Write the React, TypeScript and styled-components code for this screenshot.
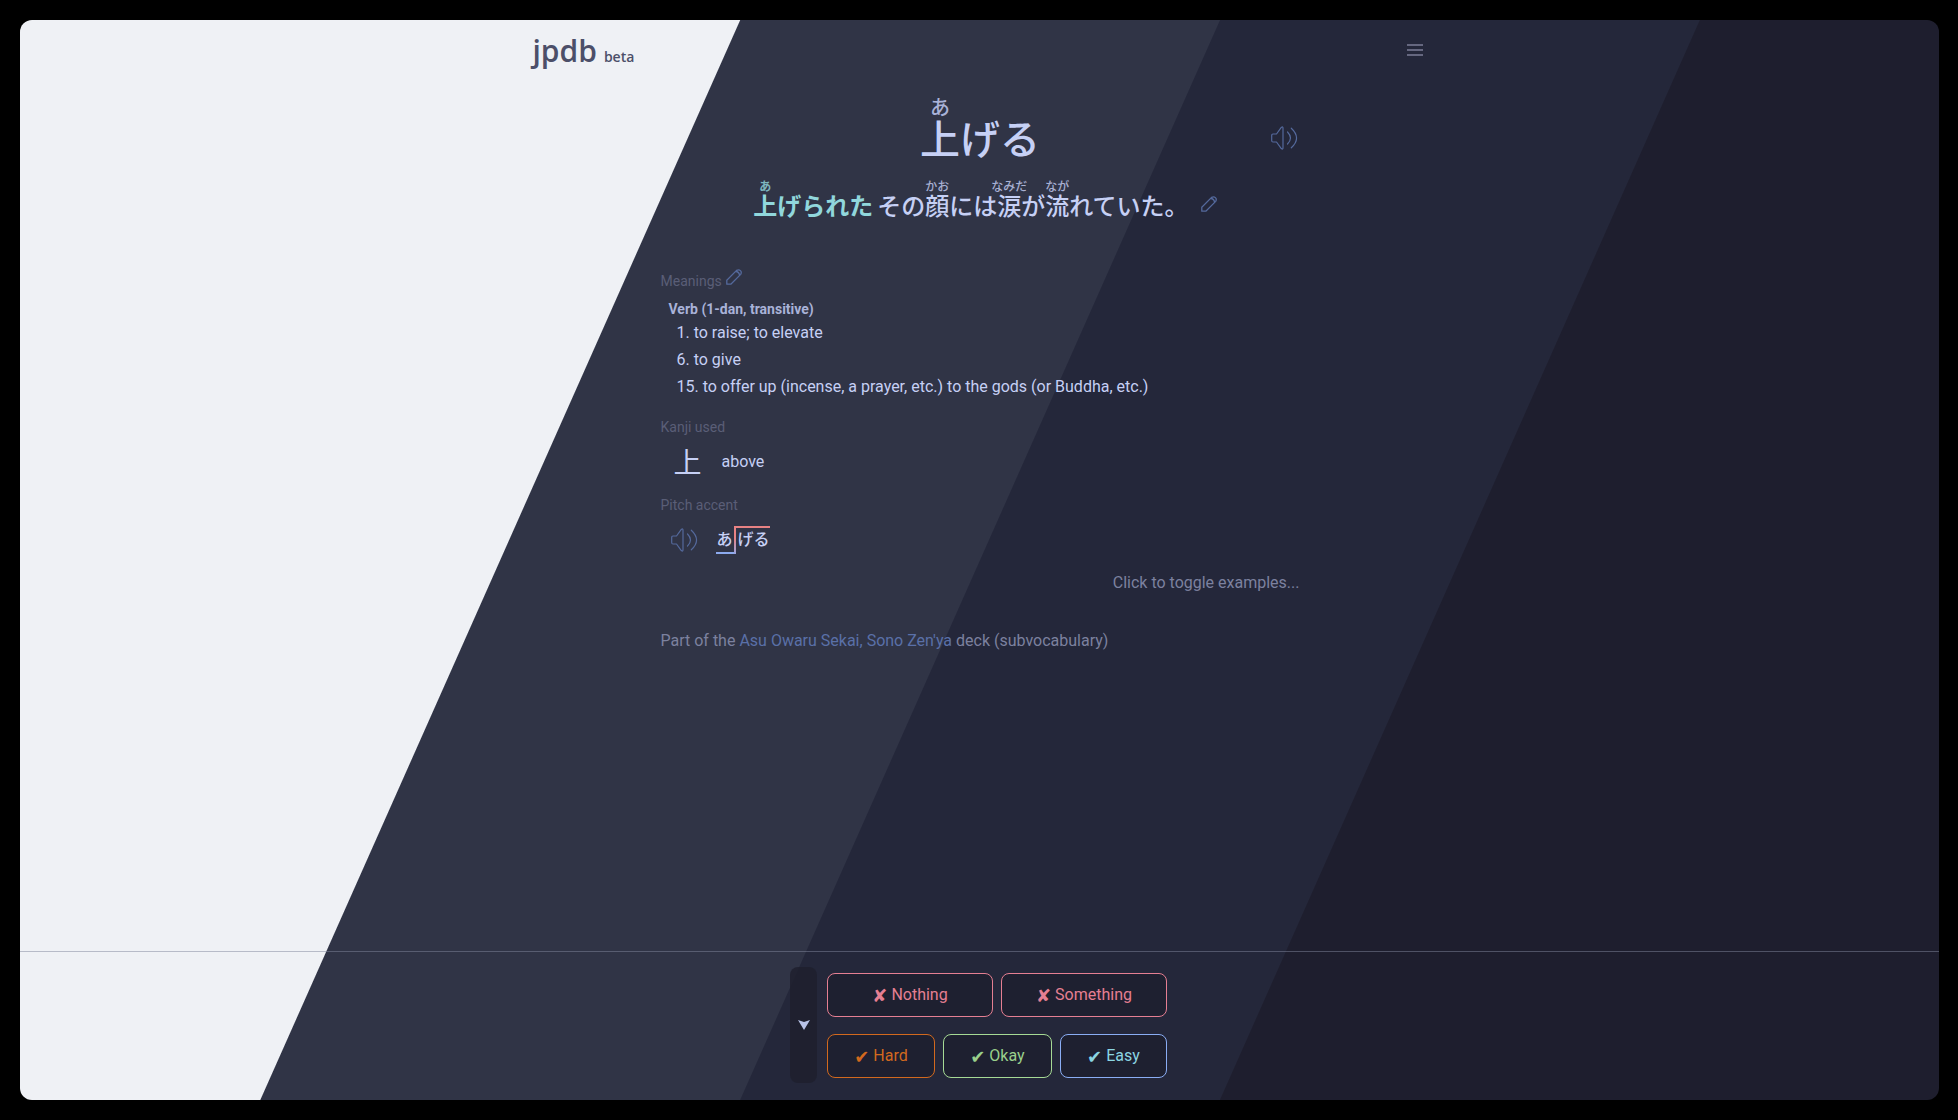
import React from "react";
import styled, { createGlobalStyle, css } from "styled-components";

const latin = `Roboto, "Noto Sans CJK JP", "DejaVu Sans", sans-serif`;
const japanese = `"Liberation Sans", "Noto Sans CJK JP", sans-serif`;

const GlobalStyle = createGlobalStyle`
  * { box-sizing: border-box; }
  body {
    margin: 0;
    background: #000;
    color: #c6d0f5;
    font: 16px/24px ${latin};
  }
  button, a { font: inherit; color: inherit; }
  button { cursor: pointer; }
`;

const Frame = styled.div`
  min-height: 100vh;
  padding: 20px 19px 20px 20px;
  display: flex;
`;

const Page = styled.div`
  flex: 1;
  display: flex;
  flex-direction: column;
  overflow: hidden;
  border-radius: 12px;
  background: linear-gradient(
    113.96deg,
    #eff1f5 30%,
    #303446 calc(30% + 1px) 50%,
    #24273a calc(50% + 1px) 70%,
    #1e1e2e calc(70% + 1px)
  );
`;

const Header = styled.header`
  width: 100%;
  max-width: 900px;
  height: 60px;
  margin: 0 auto;
  padding: 0 7px 0 3px;
  display: flex;
  align-items: center;
  justify-content: space-between;
`;

const Logo = styled.a`
  display: flex;
  align-items: baseline;
  gap: 7px;
  padding-top: 8px;
  color: #4c4f69;
  text-decoration: none;
  && { font: 600 30px/40px "Open Sans", sans-serif; }
`;

const Beta = styled.span`
  font-size: 14px;
`;

const PlainButton = styled.button`
  display: flex;
  padding: 0;
  border: 0;
  background: none;
  color: #54699c;
`;

const MenuButton = styled(PlainButton)`
  color: #65677f;
`;

const Main = styled.main`
  flex: 1;
  width: 100%;
  max-width: 642px;
  margin: 0 auto;
  padding: 0 1px 0 2px;
`;

const TitleRow = styled.div`
  display: grid;
  grid-template-columns: 1fr auto 1fr;
  align-items: end;
  padding: 17px 2px 0;
`;

const Title = styled.h1`
  grid-column: 2;
  margin: 0;
  font: 500 40px/52px ${japanese};

  rt {
    font-size: 20px;
    line-height: 24px;
    color: #a9b2d8;
  }
`;

const TitleAudio = styled(PlainButton)`
  justify-self: end;
  margin-bottom: 16px;
`;

const Sentence = styled.p`
  display: flex;
  align-items: center;
  justify-content: center;
  gap: 4px;
  margin: 14px 0 0;
  font: 500 24px/32px ${japanese};

  rt {
    font-size: 12px;
    line-height: 16px;
    opacity: 0.8;
  }

  ${PlainButton} {
    margin: 4px -10px 0 8px;
  }
`;

const Highlight = styled.strong`
  color: #91d7dc;
  font-weight: 700;
`;

const Label = styled.h2`
  display: flex;
  align-items: center;
  gap: 4px;
  margin: 0;
  color: #5a5e77;
  font-size: 14px;
  font-weight: 400;
  line-height: 24px;

  ${PlainButton} { margin-bottom: 8px; }
`;

const Meanings = styled.section`
  margin-top: 46px;
`;

const PartOfSpeech = styled.h3`
  margin: 6px 0 2px 8px;
  color: #a9b2d8;
  font-size: 14px;
  font-weight: 700;
  line-height: 20px;
`;

const Definitions = styled.ol`
  list-style: none;
  margin: 0 0 0 16px;
  padding: 0;
  display: grid;
  gap: 3px;
`;

const Block = styled.section<{ $tight?: boolean }>`
  margin-top: ${(p) => (p.$tight ? 8 : 16)}px;
`;

const Row = styled.div`
  display: flex;
  align-items: center;
  height: 46px;
`;

const Kanji = styled.a`
  margin: 0 20px 0 13px;
  padding-top: 4px;
  text-decoration: none;
  && { font: 400 28px/40px ${japanese}; }
`;

const RowAudio = styled(PlainButton)`
  margin: 0 18px 0 10px;
`;

const Pitch = styled.span`
  display: flex;
  font: 500 16px/24px ${japanese};
`;

const Low = styled.span`
  padding: 2px 1px 0;
  border-bottom: 2px solid #8caaee;
`;

const High = styled.span`
  padding: 0 0 2px 2px;
  border: 2px solid;
  border-width: 2px 0 0 2px;
  border-image: linear-gradient(#e78284 40%, #8caaee) 2;
`;

const Toggle = styled(PlainButton)`
  margin: 8px 0 0 auto;
  color: #7c819f;
`;

const Deck = styled.p`
  margin: 34px 0 0;
  color: #7c819f;

  a { color: #5a70a8; text-decoration: none; }
`;

const Footer = styled.footer`
  display: flex;
  justify-content: center;
  gap: 10px;
  padding: 15px 2px 17px 0;
  border-top: 1px solid rgba(128, 133, 155, 0.5);
`;

const Collapse = styled.button`
  display: flex;
  align-items: center;
  justify-content: center;
  width: 27px;
  padding: 0;
  border: 0;
  border-radius: 8px;
  background: rgba(30, 32, 46, 0.85);
  color: #b9c3e8;
`;

const Grades = styled.div`
  width: 340px;
  padding: 6px 0 5px;
  display: grid;
  gap: 17px;
`;

const GradeRow = styled.div`
  display: flex;
  gap: 8px;
`;

const tones = {
  red: ["#e57f92", "#e57f92"],
  orange: ["#d2691e", "#d2691e"],
  green: ["#a6da95", "#9ad08b"],
  blue: ["#8aadf4", "#8bd5e2"],
};

const Grade = styled.button<{ $tone: keyof typeof tones; $even?: boolean }>`
  flex: 1 1 ${(p) => (p.$even ? "0" : "auto")};
  display: flex;
  align-items: center;
  justify-content: center;
  gap: 4px;
  height: 44px;
  padding: 0 24px;
  border-radius: 8px;
  background: #1e2030;
  ${(p) => css`
    border: 1px solid ${tones[p.$tone][0]};
    && { color: ${tones[p.$tone][1]}; }
  `}
`;

const Mark = styled.span`
  padding-top: 2px;
  font: 18px/24px "DejaVu Sans", sans-serif;
`;

const Speaker = () => (
  <svg width="27" height="24" viewBox="0 0 27 24" fill="none" stroke="currentColor" strokeWidth="1.2" strokeLinecap="round" strokeLinejoin="round" aria-hidden="true">
    <path d="M2 8h3.5l4.8-6.6q1.7-1.2 1.7.8v19.600q0 2-1.700.8L5.500 16H2q-1.300 0-1.300-1.500v-5Q.7 8 2 8z" />
    <path d="M16.500 6q6 6 0 12M20.300 2.200q10.500 9.800 0 19.600" />
  </svg>
);

const Pencil = () => (
  <svg width="16" height="16" viewBox="0 0 16 16" fill="none" stroke="currentColor" strokeWidth="1.300" strokeLinejoin="round" aria-hidden="true">
    <path d="M.8 15.200v-4L10.600 1.400q2.200-1.300 3.800.2t.3 3.800L4.800 15.200zM9.800 2.500q3.400.2 3.700 3.800" />
  </svg>
);

export default function App() {
  return (
    <Frame>
      <GlobalStyle />
      <Page>
        <Header>
          <Logo href="#">
            jpdb <Beta>beta</Beta>
          </Logo>
          <MenuButton aria-label="Menu">
            <svg width="16" height="12" viewBox="0 0 16 12" fill="currentColor" aria-hidden="true">
              <path d="M0 0h16v2H0zM0 5h16v2H0zM0 10h16v2H0z" />
            </svg>
          </MenuButton>
        </Header>

        <Main>
          <TitleRow>
            <Title lang="ja">
              <ruby>上<rt>あ</rt></ruby>げる
            </Title>
            <TitleAudio aria-label="Play word"><Speaker /></TitleAudio>
          </TitleRow>

          <Sentence lang="ja">
            <Highlight><ruby>上<rt>あ</rt></ruby>げられた</Highlight>
            <span>
              その<ruby>顔<rt>かお</rt></ruby>には<ruby>涙<rt>なみだ</rt></ruby>が<ruby>流<rt>なが</rt></ruby>れていた。
            </span>
            <PlainButton aria-label="Edit sentence"><Pencil /></PlainButton>
          </Sentence>

          <Meanings>
            <Label>
              Meanings
              <PlainButton aria-label="Edit meanings"><Pencil /></PlainButton>
            </Label>
            <PartOfSpeech>Verb (1-dan, transitive)</PartOfSpeech>
            <Definitions>
              <li>1. to raise; to elevate</li>
              <li>6. to give</li>
              <li>15. to offer up (incense, a prayer, etc.) to the gods (or Buddha, etc.)</li>
            </Definitions>
          </Meanings>

          <Block>
            <Label>Kanji used</Label>
            <Row>
              <Kanji href="#" lang="ja">上</Kanji>
              above
            </Row>
          </Block>

          <Block $tight>
            <Label>Pitch accent</Label>
            <Row>
              <RowAudio aria-label="Play pronunciation"><Speaker /></RowAudio>
              <Pitch lang="ja"><Low>あ</Low><High>げる</High></Pitch>
            </Row>
          </Block>

          <Toggle>Click to toggle examples...</Toggle>
          <Deck>
            Part of the <a href="#">Asu Owaru Sekai, Sono Zen'ya</a> deck (subvocabulary)
          </Deck>
        </Main>

        <Footer>
          <Collapse aria-label="Collapse">
            <svg width="12" height="10" viewBox="0 0 12 10" fill="currentColor" aria-hidden="true">
              <path d="M0 0l6 2 6-2-6 10z" />
            </svg>
          </Collapse>
          <Grades>
            <GradeRow>
              <Grade $tone="red" $even><Mark>✘</Mark> Nothing</Grade>
              <Grade $tone="red" $even><Mark>✘</Mark> Something</Grade>
            </GradeRow>
            <GradeRow>
              <Grade $tone="orange"><Mark>✔</Mark> Hard</Grade>
              <Grade $tone="green"><Mark>✔</Mark> Okay</Grade>
              <Grade $tone="blue"><Mark>✔</Mark> Easy</Grade>
            </GradeRow>
          </Grades>
        </Footer>
      </Page>
    </Frame>
  );
}
